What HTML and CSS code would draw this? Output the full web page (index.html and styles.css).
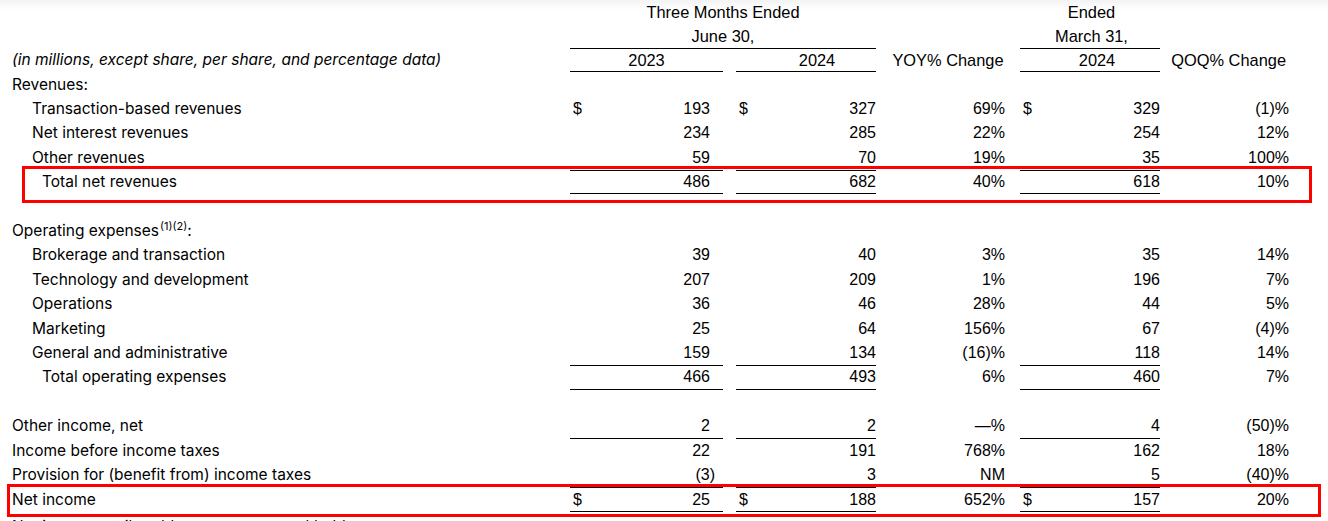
FILE: index.html
```html
<!DOCTYPE html>
<html lang="en">
<head>
<meta charset="utf-8">
<title>Income statement</title>
<link rel="stylesheet" href="styles.css">
</head>
<body>
<div class="page">
  <div class="sheet">
    <div class="row hdr">
      <div class="lab"></div>
      <div class="span3 ctr hx">Three Months Ended</div>
      <div class="yoy"></div>
      <div class="d ctr hx">Ended</div>
      <div class="qoq"></div>
    </div>
    <div class="row hdr">
      <div class="lab"></div>
      <div class="span3 ctr hx">June 30,</div>
      <div class="yoy"></div>
      <div class="d ctr hx">March 31,</div>
      <div class="qoq"></div>
    </div>
    <div class="row">
      <div class="lab it">(in millions, except share, per share, and percentage data)</div>
      <div class="a ctr t b yr1 hx">2023</div>
      <div class="gap t"></div>
      <div class="b2 ctr t b yr hx">2024</div>
      <div class="yoy ctr hd hx">YOY% Change</div>
      <div class="d ctr t b yr2 hx">2024</div>
      <div class="qoq hd hx">QOQ% Change</div>
    </div>
    <div class="row">
      <div class="lab">Revenues:</div>
    </div>
    <div class="row">
      <div class="lab i1">Transaction-based revenues</div>
      <div class="a n"><span>$</span><span>193</span></div><div class="gap"></div>
      <div class="b2 n"><span>$</span><span>327</span></div>
      <div class="yoy pc">69%</div>
      <div class="d n"><span>$</span><span>329</span></div>
      <div class="qoq pc">(1)%</div>
    </div>
    <div class="row">
      <div class="lab i1">Net interest revenues</div>
      <div class="a n"><span>234</span></div><div class="gap"></div>
      <div class="b2 n"><span>285</span></div>
      <div class="yoy pc">22%</div>
      <div class="d n"><span>254</span></div>
      <div class="qoq pc">12%</div>
    </div>
    <div class="row">
      <div class="lab i1">Other revenues</div>
      <div class="a n"><span>59</span></div><div class="gap"></div>
      <div class="b2 n"><span>70</span></div>
      <div class="yoy pc">19%</div>
      <div class="d n"><span>35</span></div>
      <div class="qoq pc">100%</div>
    </div>
    <div class="row">
      <div class="lab i2">Total net revenues</div>
      <div class="a n t b"><span>486</span></div><div class="gap"></div>
      <div class="b2 n t b"><span>682</span></div>
      <div class="yoy pc">40%</div>
      <div class="d n t b"><span>618</span></div>
      <div class="qoq pc">10%</div>
    </div>
    <div class="row"></div>
    <div class="row">
      <div class="lab"><span>Operating expenses<sup>(1)(2)</sup>:</span></div>
    </div>
    <div class="row">
      <div class="lab i1">Brokerage and transaction</div>
      <div class="a n"><span>39</span></div><div class="gap"></div>
      <div class="b2 n"><span>40</span></div>
      <div class="yoy pc">3%</div>
      <div class="d n"><span>35</span></div>
      <div class="qoq pc">14%</div>
    </div>
    <div class="row">
      <div class="lab i1">Technology and development</div>
      <div class="a n"><span>207</span></div><div class="gap"></div>
      <div class="b2 n"><span>209</span></div>
      <div class="yoy pc">1%</div>
      <div class="d n"><span>196</span></div>
      <div class="qoq pc">7%</div>
    </div>
    <div class="row">
      <div class="lab i1">Operations</div>
      <div class="a n"><span>36</span></div><div class="gap"></div>
      <div class="b2 n"><span>46</span></div>
      <div class="yoy pc">28%</div>
      <div class="d n"><span>44</span></div>
      <div class="qoq pc">5%</div>
    </div>
    <div class="row">
      <div class="lab i1">Marketing</div>
      <div class="a n"><span>25</span></div><div class="gap"></div>
      <div class="b2 n"><span>64</span></div>
      <div class="yoy pc">156%</div>
      <div class="d n"><span>67</span></div>
      <div class="qoq pc">(4)%</div>
    </div>
    <div class="row">
      <div class="lab i1">General and administrative</div>
      <div class="a n"><span>159</span></div><div class="gap"></div>
      <div class="b2 n"><span>134</span></div>
      <div class="yoy pc">(16)%</div>
      <div class="d n"><span>118</span></div>
      <div class="qoq pc">14%</div>
    </div>
    <div class="row">
      <div class="lab i2">Total operating expenses</div>
      <div class="a n t b"><span>466</span></div><div class="gap"></div>
      <div class="b2 n t b"><span>493</span></div>
      <div class="yoy pc">6%</div>
      <div class="d n t b"><span>460</span></div>
      <div class="qoq pc">7%</div>
    </div>
    <div class="row"></div>
    <div class="row">
      <div class="lab">Other income, net</div>
      <div class="a n b"><span>2</span></div><div class="gap"></div>
      <div class="b2 n b"><span>2</span></div>
      <div class="yoy pc">—%</div>
      <div class="d n b"><span>4</span></div>
      <div class="qoq pc">(50)%</div>
    </div>
    <div class="row">
      <div class="lab">Income before income taxes</div>
      <div class="a n"><span>22</span></div><div class="gap"></div>
      <div class="b2 n"><span>191</span></div>
      <div class="yoy pc">768%</div>
      <div class="d n"><span>162</span></div>
      <div class="qoq pc">18%</div>
    </div>
    <div class="row">
      <div class="lab">Provision for (benefit from) income taxes</div>
      <div class="a n"><span class="neg">(3)</span></div><div class="gap"></div>
      <div class="b2 n"><span>3</span></div>
      <div class="yoy pc">NM</div>
      <div class="d n"><span>5</span></div>
      <div class="qoq pc">(40)%</div>
    </div>
    <div class="row">
      <div class="lab">Net income</div>
      <div class="a n t b"><span>$</span><span>25</span></div><div class="gap"></div>
      <div class="b2 n t b"><span>$</span><span>188</span></div>
      <div class="yoy pc">652%</div>
      <div class="d n t b"><span>$</span><span>157</span></div>
      <div class="qoq pc">20%</div>
    </div>
    <div class="row last">
      <div class="lab">Net income attributable to common stockholders</div>
    </div>
  </div>
  <div class="mark mark1"></div>
  <div class="mark mark2"></div>
</div>
</body>
</html>
```

FILE: styles.css
```css
html, body {
  margin: 0;
  padding: 0;
  background: #fff;
}
body {
  color: #000;
  font-family: "Liberation Sans", Arial, sans-serif;
  font-size: 16px;
  overflow: hidden;
}
.page {
  position: relative;
  width: 1328px;
  height: 521px;
  overflow: hidden;
  background: linear-gradient(#f3f3f3 0, #fff 10px);
}
.sheet {
  display: flex;
  flex-direction: column;
}
.row {
  display: grid;
  grid-template-columns: 570px 153px 13px 140px 144px 140px 1fr;
  height: 24.42px;
  align-items: stretch;
}
.row.hdr {
  height: 24px;
}
.row > div {
  box-sizing: border-box;
  display: flex;
  align-items: center;
  white-space: nowrap;
}
.row.last > div {
  align-items: flex-start;
  padding-top: 5px;
}
.lab {
  grid-column: 1;
  padding-left: 12px;
  padding-bottom: 1px;
  font-family: Inter, "Liberation Sans", sans-serif;
  font-size: 15.5px;
}
.lab.it { font-style: italic; }
.lab.i1 { padding-left: 32px; }
.lab.i2 { padding-left: 42px; }
.lab sup {
  font-size: 11px;
  vertical-align: 6px;
  line-height: 0;
  margin-left: 1px;
}
.hx { font-size: 16.4px; }
.span3 { grid-column: 2 / 5; }
.a { grid-column: 2; padding: 0 13px 0 3px; }
.gap { grid-column: 3; }
.b2 { grid-column: 4; padding-left: 3px; }
.yoy { grid-column: 5; padding-right: 15px; }
.d { grid-column: 6; padding-left: 3px; }
.qoq { grid-column: 7; padding-right: 39px; }
.ctr { justify-content: center; }
.a.yr1 { padding: 0; }
.yr { padding-left: 22px; }
.yr2 { padding-left: 14px; }
.hd.ctr { padding-right: 0; }
.qoq.hd { justify-content: flex-end; padding-right: 42px; }
.n { justify-content: flex-end; }
.n span:first-child:not(:last-child) { margin-right: auto; }
.neg { margin-right: -5px; }
.pc { justify-content: flex-end; }
.t { border-top: 1px solid #000; }
.b { border-bottom: 1px solid #000; }
.mark {
  position: absolute;
  border: 3px solid #ff0000;
  box-sizing: border-box;
}
.mark1 {
  left: 22px;
  top: 166px;
  width: 1290px;
  height: 37px;
}
.mark2 {
  left: 7px;
  top: 484px;
  width: 1314px;
  height: 33px;
}
```
